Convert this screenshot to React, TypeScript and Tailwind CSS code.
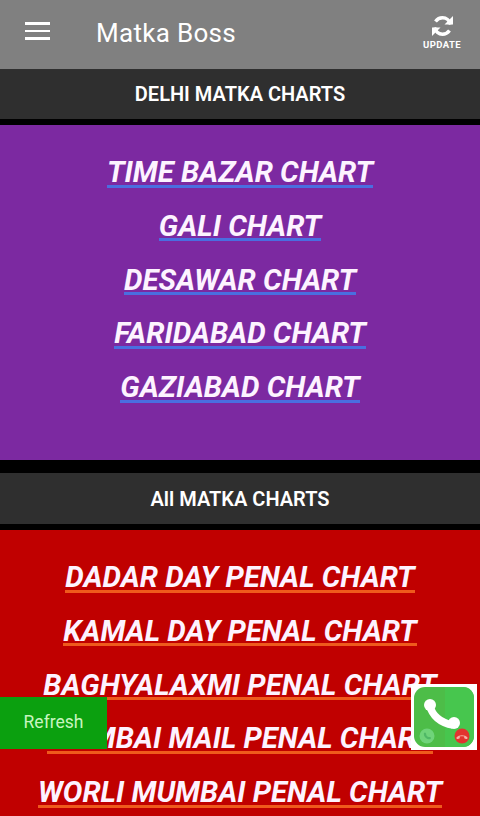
import { useState } from "react";

const delhi = ["TIME BAZAR CHART", "GALI CHART", "DESAWAR CHART", "FARIDABAD CHART", "GAZIABAD CHART"];
const all = [
  "DADAR DAY PENAL CHART",
  "KAMAL DAY PENAL CHART",
  "BAGHYALAXMI PENAL CHART",
  "MUMBAI MAIL PENAL CHART",
  "WORLI MUMBAI PENAL CHART",
];

function ChartLink({ label, line }: { label: string; line: string }) {
  return (
    <div className="h-[53.75px] flex justify-center">
      <a
        className={`h-[31.5px] block text-[29.3px] leading-[33px] font-bold italic text-[#fdf3ff] whitespace-nowrap border-b-[3px] ${line}`}
      >
        {label}
      </a>
    </div>
  );
}

function SectionBar({ label, height }: { label: string; height: string }) {
  return (
    <div className={`${height} bg-[#2f2f2f] flex items-center justify-center text-white text-[20px] font-semibold`}>
      {label}
    </div>
  );
}

export default function App() {
  const [, setTick] = useState(0);
  return (
    <div className="relative w-[480px] h-[816px] overflow-hidden bg-black font-['Roboto',sans-serif]">
      <header className="h-[69px] bg-[#808080] flex items-center text-white">
        <button className="ml-[25px] w-[25px] flex flex-col gap-[4.6px] -mt-[7px]" aria-label="Menu">
          <span className="block h-[2.7px] bg-white" />
          <span className="block h-[2.7px] bg-white" />
          <span className="block h-[2.7px] bg-white" />
        </button>
        <h1 className="ml-[46px] text-[26px] leading-none font-normal flex-1 -mt-[4px] tracking-[0.3px]">Matka Boss</h1>
        <button className="mr-[19px] w-[38px] flex flex-col items-center -mt-[5px]" onClick={() => setTick((t) => t + 1)}>
          <svg viewBox="0 0 24 24" className="w-[25px] h-[24px]" fill="none" stroke="white" strokeWidth="3.4">
            <path d="M20 10.5C19 6.5 15.8 3.8 12 3.8c-3 0-5.300 1.300-7 3.700" />
            <path d="M4 13.500c1 4 4.200 6.700 8 6.700 3 0 5.300-1.300 7-3.700" />
            <path d="M22.500 2v8.500H14z" fill="white" stroke="none" />
            <path d="M1.500 22v-8.500H10z" fill="white" stroke="none" />
          </svg>
          <span className="text-[9.5px] leading-[11px] font-bold tracking-[0.4px] mt-[1px]">UPDATE</span>
        </button>
      </header>

      <SectionBar label="DELHI MATKA CHARTS" height="h-[50px] pb-[1px]" />
      <section className="mt-[6px] h-[335px] bg-[#7c29a1] pt-[31px]">
        {delhi.map((c) => (
          <ChartLink key={c} label={c} line="border-[#4a6ee0]" />
        ))}
      </section>

      <div className="mt-[13px]">
        <SectionBar label="All MATKA CHARTS" height="h-[51px]" />
      </div>
      <section className="mt-[6px] h-[286px] bg-[#c00000] pt-[31px]">
        {all.map((c) => (
          <ChartLink key={c} label={c} line="border-[#ef5a1c]" />
        ))}
      </section>

      <button className="absolute left-0 top-[697px] w-[107px] h-[52px] pb-[2px] bg-[#0ba00f] text-[#c8f5c0] text-[17.5px] flex items-center justify-center">
        Refresh
      </button>

      <div className="absolute left-[411px] top-[684px] w-[66px] h-[66px] bg-white p-[3px]">
        <svg viewBox="0 0 60 60" className="w-[60px] h-[60px]">
          <rect x="0" y="0" width="60" height="60" rx="11" fill="#4dbd48" />
          <path d="M31 0h18a11 11 0 0 1 11 11v38a11 11 0 0 1-11 11H31z" fill="#47c64e" />
          <path d="M16 19C18 28 26 36 39 38" fill="none" stroke="white" strokeWidth="7.5" />
          <circle cx="16" cy="18" r="6" fill="white" />
          <circle cx="40" cy="36" r="6" fill="white" />
          <circle cx="13" cy="49" r="7.500" fill="#6fd47a" />
          <path d="M10 46c1-1 1.500-.5 2 .5s0 1.200.5 2 1.200 1.300 2 1.500 1-.5 2 .2.500 1.500-.5 2c-3 .8-7-3.200-6-6.200z" fill="#4fb866" />
          <circle cx="48" cy="49" r="7.500" fill="#e2332f" />
          <path d="M42.500 50.500c2.500-3 8.500-3 11 0 .5 1-.5 1.800-1.500 1.500l-1.800-.8v-1.600c-1.500-.5-3-.5-4.400 0v1.600l-1.800.8c-1 .3-2-.5-1.500-1.500z" fill="#f6b0a8" />
        </svg>
      </div>
    </div>
  );
}
